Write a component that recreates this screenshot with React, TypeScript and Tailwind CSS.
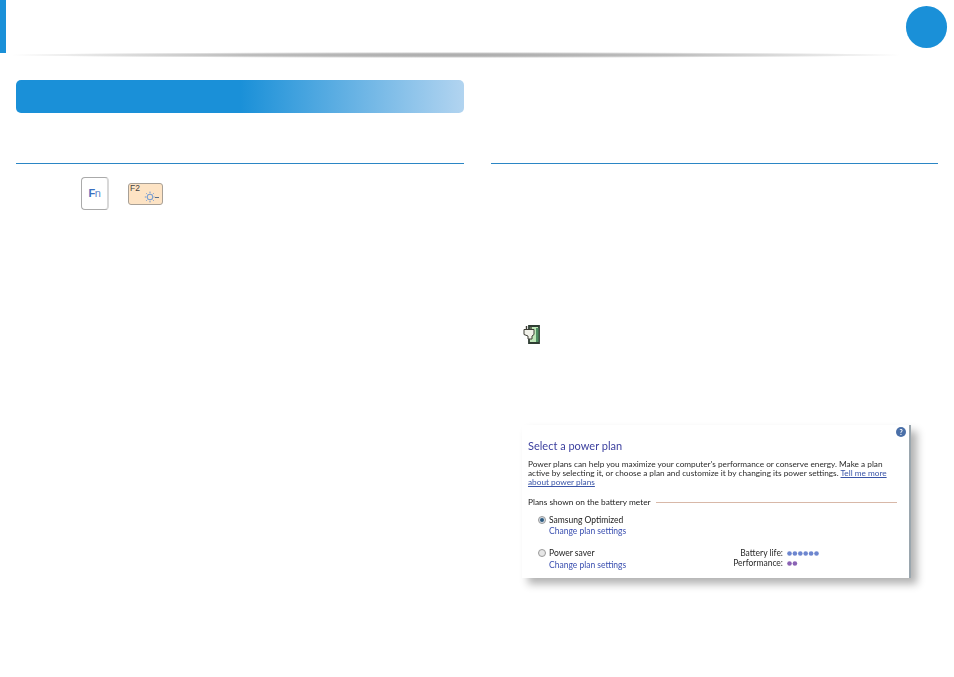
import React from "react";

const blue = "bg-[#1a90d8]";

const Dots = ({ count, color }: { count: number; color: string }) => (
  <svg width="33" height="5" viewBox="0 0 33 5" fill={color}>
    {Array.from({ length: count }).map((_, i) => (
      <circle key={i} cx={2.5 + i * 5.4} cy="2.5" r="2.3" />
    ))}
  </svg>
);

const SunMinus = () => (
  <svg width="16" height="14" viewBox="0 0 16 14" fill="none" stroke="#5b8fd6" strokeWidth="0.9">
    <circle cx="6" cy="7" r="2.8" />
    <path d="M6 1.6v1.6M6 10.800v1.600M.8 7h1.600M9.600 7h1M2.300 3.300l1 1M8.700 9.700l1 1M2.300 10.700l1-1M8.700 4.300l1-1" />
    <path d="M11 7.500h4" stroke="#5c6f8a" strokeWidth="1" />
  </svg>
);

const BatteryIcon = () => (
  <svg width="18" height="21" viewBox="0 0 18 21">
    <path d="M6 2h10v17H6z" fill="#bfe6b8" stroke="#2f3d33" strokeWidth="1.800" />
    <rect x="13" y="4" width="2.500" height="14" fill="#4f8f62" />
    <path d="M1 5.500h10v5l-2 1.500v3H5v-3l-4-1.500z" fill="#f2f2ea" stroke="#3e3e36" strokeWidth="1" />
    <path d="M3.500 2v3.500M8 2v3.500" stroke="#3e3e36" strokeWidth="1.400" />
  </svg>
);

function PlanName({ selected, name }: { selected: boolean; name: string }) {
  return (
    <div className="flex items-center gap-[3px] pl-[10px] h-[10px]">
      <span
        className={`w-[8px] h-[8px] rounded-full border border-[#9a9a9a] flex items-center justify-center ${selected ? "bg-[#d6dee6]" : "bg-[#e6e6e6]"}`}
      >
        {selected && <span className="w-[4px] h-[4px] rounded-full bg-[#2c5a80]" />}
      </span>
      <span className="text-[#222]">{name}</span>
    </div>
  );
}

export default function App() {
  return (
    <div className="w-[954px] h-[677px] bg-white overflow-hidden font-['Liberation_Sans',sans-serif]">
      {/* Header */}
      <div className="flex justify-between h-[53px]">
        <div className={`w-[6px] h-[53px] ${blue}`} />
        <div className={`w-[41px] h-[42px] mt-[6px] mr-[7px] rounded-full ${blue}`} />
      </div>
      <div className="h-[6px] w-[900px] ml-[6px] -mt-[1px] bg-[radial-gradient(ellipse_closest-side,#a8a8a8_0%,#bdbdbd_50%,#e8e8e8_85%,#ffffff_100%)]" />

      <div className="flex gap-[27px] px-[16px]">
        {/* Left column */}
        <div className="w-[448px]">
          <div className="h-[33px] mt-[22px] rounded-[5px] bg-[linear-gradient(90deg,#1a90d8_0%,#1a90d8_50%,#b2d4f0_100%)]" />
          <div className="mt-[50px] border-t border-[#2b86c5]" />
          <div className="flex items-center gap-[19px] pl-[65px] mt-[13px]">
            <div className="w-[28px] h-[33px] rounded-[4px] border border-[#aaa] border-r-[#d8d8d8] border-r-2 flex items-center justify-center text-[11px] text-[#5f87c8] tracking-[-0.5px]">
              <span className="font-bold text-[#3a6fc0]">F</span>n
            </div>
            <div className="relative w-[35px] h-[22px] rounded-[3px] border border-[#a8a096] bg-[#fde3c4]">
              <span className="absolute left-[1px] -top-[2px] text-[8.5px] text-[#444]">F2</span>
              <span className="absolute left-[15px] top-[6px]">
                <SunMinus />
              </span>
            </div>
          </div>
        </div>

        {/* Right column */}
        <div className="w-[447px]">
          <div className="mt-[105px] border-t border-[#2b86c5]" />
          <div className="mt-[160px] pl-[32px]">
            <BatteryIcon />
          </div>

          {/* Power plan screenshot */}
          <div className="relative ml-[31px] mt-[80px] w-[389px] h-[153px] bg-white border-r-2 border-[#9aa6ae] shadow-[6px_6px_8px_rgba(0,0,0,0.3)] text-[8.5px] leading-[9px] font-['Lato',sans-serif] text-[#2a2a2a] blur-[0.25px]">
            <span className="absolute right-[3px] top-[2px] w-[10px] h-[10px] rounded-full bg-[#4a6fa8] text-white text-[7px] leading-[10px] text-center font-bold">
              ?
            </span>
            <div className="pt-[14px] pl-[6px]">
              <div className="text-[11px] leading-[14px] text-[#3b3f9e]">Select a power plan</div>
              <div className="mt-[7px] text-[8.25px] whitespace-nowrap">
                Power plans can help you maximize your computer's performance or conserve energy. Make a plan
                <br />
                active by selecting it, or choose a plan and customize it by changing its power settings.{" "}
                <span className="text-[#3a55a8] underline">Tell me more</span>
                <br />
                <span className="text-[#3a55a8] underline">about power plans</span>
              </div>
              <div className="flex items-center gap-[5px] mt-[11px] pr-[12px]">
                <span className="text-[8.3px] text-[#222] whitespace-nowrap">Plans shown on the battery meter</span>
                <span className="flex-1 border-t border-[#d8b8a8]" />
              </div>
              <div className="mt-[8px]">
                <PlanName selected name="Samsung Optimized" />
                <div className="pl-[21px] mt-[2px] text-[#3a4fb0]">Change plan settings</div>
              </div>
              <div className="flex mt-[12px]">
                <div className="w-[166px]">
                  <PlanName selected={false} name="Power saver" />
                  <div className="pl-[21px] mt-[3px] text-[#3a4fb0]">Change plan settings</div>
                </div>
                <div className="flex flex-col gap-[1px] w-[89px] items-end pt-[1px]">
                  <span>Battery life:</span>
                  <span>Performance:</span>
                </div>
                <div className="flex flex-col gap-[5px] pl-[4px] pt-[3px]">
                  <Dots count={6} color="#6d86cf" />
                  <Dots count={2} color="#8a62b4" />
                </div>
              </div>
            </div>
          </div>
        </div>
      </div>
    </div>
  );
}
